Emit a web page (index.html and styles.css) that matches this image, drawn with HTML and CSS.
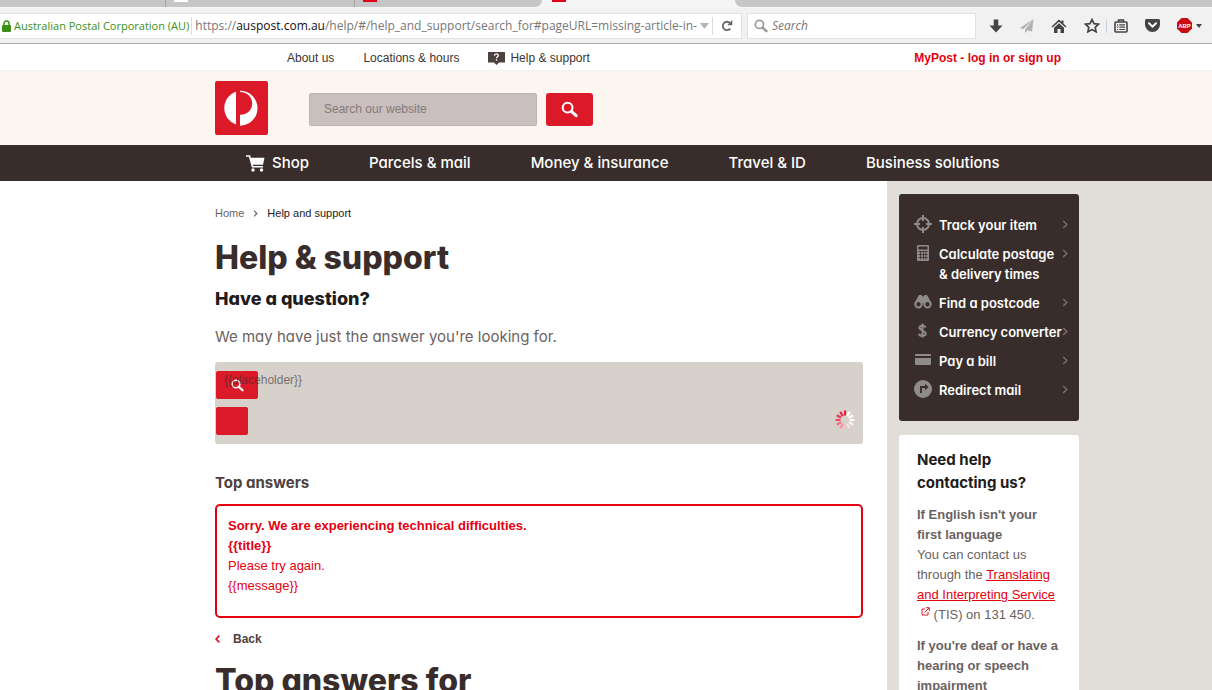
FILE: index.html
```html
<!DOCTYPE html>
<html lang="en">
<head>
    <meta charset="UTF-8">
    <meta name="viewport" content="width=device-width, initial-scale=1.0">
    <title>Help and support - Australia Post</title>
    <link rel="stylesheet" href="styles.css">
</head>
<body>
    <!-- Shared icons -->
    <svg class="icon-defs" aria-hidden="true">
        <symbol id="icon-search" viewBox="0 0 18 18">
            <circle cx="7" cy="7" r="5.2" fill="none" stroke="currentColor" stroke-width="2.2"/>
            <path d="M11 11l5 4.6" stroke="currentColor" stroke-width="3.2" stroke-linecap="round"/>
        </symbol>
        <symbol id="icon-chevron" viewBox="0 0 6 10">
            <path d="M1 1l4 4-4 4" fill="none" stroke="currentColor" stroke-width="1.6"/>
        </symbol>
    </svg>

    <div class="window">
        <!-- Browser chrome -->
        <div class="tab-strip">
            <div class="tab tab-first"></div>
            <div class="tab tab-second"><span class="favicon favicon-blank"></span></div>
            <div class="tab tab-third"><span class="favicon"></span></div>
            <div class="tab tab-active"><span class="favicon"></span></div>
            <div class="tab tab-rest"></div>
        </div>
        <div class="toolbar">
            <div class="address-bar">
                <svg class="lock" width="9" height="12" viewBox="0 0 9 12"><path d="M2 6V3.500a2.500 2.500 0 0 1 5 0V6" fill="none" stroke="#3b8f17" stroke-width="1.500"/><rect y="5" width="9" height="7" rx="1" fill="#3b8f17"/></svg>
                <span class="identity">Australian Postal Corporation (AU)</span>
                <span class="url">https://<b>auspost.com.au</b>/help/#/help_and_support/search_for#pageURL=missing-article-in-</span>
                <svg class="dropmarker" width="9" height="6" viewBox="0 0 9 6"><path d="M0 0h9L4.500 6z" fill="#b5b5b5"/></svg>
                <button class="reload" type="button" aria-label="Reload">
                    <svg width="12" height="12" viewBox="0 0 12 12"><path d="M9.300 8.600A4.200 4.200 0 1 1 9 3" fill="none" stroke="#666" stroke-width="1.800"/><path d="M11.300 0v5.200H6.200z" fill="#666"/></svg>
                </button>
            </div>
            <label class="browser-search">
                <svg width="14" height="14"><use href="#icon-search"/></svg>
                <input type="text" placeholder="Search" aria-label="Search the web">
            </label>
            <div class="toolbar-icons">
                <button type="button" aria-label="Downloads"><svg width="14" height="14" viewBox="0 0 14 14"><path d="M4.700 0.500h4.600v6H13.500L7 13.500.5 6.500h4.200z" fill="#444"/></svg></button>
                <button type="button" aria-label="Send"><svg width="14" height="14" viewBox="0 0 14 14"><path d="M13.500 0L0 9l3.500 1zM13.500 0L5 10.500V14l2.500-2.800 4.500 1.300z" fill="#b0b0b0"/></svg></button>
                <button type="button" aria-label="Home"><svg width="16" height="14" viewBox="0 0 16 14"><path d="M8 0.500l2.500 2.300V1.500h2v3.200L15.500 7.600l-1 1L8 2.800 1.500 8.600l-1-1z" fill="#444"/><path d="M8 4.300l5 4.500V14H9.500v-4h-3v4H3V8.800z" fill="#444"/></svg></button>
                <button type="button" aria-label="Bookmark"><svg width="16" height="15" viewBox="0 0 16 15"><path d="M8 1.500l2 4.100 4.600.6-3.400 3.100.9 4.500L8 11.600l-4.100 2.200.9-4.500L1.400 6.200 6 5.600z" fill="none" stroke="#444" stroke-width="1.700"/></svg></button>
                <button class="divided" type="button" aria-label="Bookmarks list"><svg width="14" height="14" viewBox="0 0 14 14"><path d="M4.500 3V1h5v2" fill="none" stroke="#444" stroke-width="1.500"/><rect x="1" y="3" width="12" height="10" rx="1" fill="none" stroke="#444" stroke-width="1.600"/><path d="M3 5.800h1.200M5.300 5.800H11M3 8.200h1.200M5.300 8.200H11M3 10.500h1.200M5.300 10.500H11" stroke="#444" stroke-width="1.200"/></svg></button>
                <button type="button" aria-label="Pocket"><svg width="15" height="13" viewBox="0 0 15 13"><path d="M1.500 0h12A1.500 1.500 0 0 1 15 1.500v4a7.500 7.500 0 0 1-15 0v-4A1.500 1.500 0 0 1 1.500 0z" fill="#444"/><path d="M4 4.200l3.500 3.400L11 4.200" fill="none" stroke="#fff" stroke-width="2" stroke-linecap="round"/></svg></button>
                <button class="adblock" type="button" aria-label="Adblock Plus"><svg width="15" height="15" viewBox="0 0 15 15"><path d="M4.500 0h6L15 4.500v6L10.500 15h-6L0 10.500v-6z" fill="#c70d10"/><text class="abp" x="7.500" y="10" text-anchor="middle">ABP</text></svg><svg width="6" height="4" viewBox="0 0 6 4"><path d="M0 0h6L3 4z" fill="#444"/></svg></button>
            </div>
        </div>

        <!-- Site header -->
        <nav class="utility-nav" aria-label="Utility">
            <a href="#">About us</a>
            <a href="#">Locations &amp; hours</a>
            <a class="utility-help" href="#"><svg width="17" height="13" viewBox="0 0 17 13"><path d="M0 0h17v10.500h-6L8.500 13 6 10.500H0z" fill="#4d423f"/><path d="M6.500 3.700C6.500 1.300 10.300 1.400 10.300 3.500c0 1.300-1.800 1.200-1.800 2.800M8.500 7.300v1.400" fill="none" stroke="#fff" stroke-width="1.300"/></svg>Help &amp; support</a>
            <a class="login" href="#">MyPost - log in or sign up</a>
        </nav>
        <header class="site-header">
            <a class="logo" href="#" aria-label="Australia Post">
                <svg width="53" height="54" viewBox="0 0 53 54"><rect width="53" height="54" rx="2" fill="#dc1928"/><path d="M21 10.800v32.600A17.200 17.200 0 0 1 21 10.800z" fill="#fff"/><path d="M25 9.700A17.500 17.500 0 1 1 25 44.700V33.800c16 0 16.500-22.300 0-22.800z" fill="#fff"/></svg>
            </a>
            <form class="site-search">
                <input type="text" placeholder="Search our website" aria-label="Search our website">
                <button type="button" aria-label="Search"><svg width="17" height="17"><use href="#icon-search"/></svg></button>
            </form>
        </header>
        <nav class="main-nav" aria-label="Main">
            <a href="#"><svg width="19" height="17" viewBox="0 0 19 17"><path d="M0 1h3.500l3 10.800H17" fill="none" stroke="#fff" stroke-width="1.600"/><path d="M4 2.800h14.500l-1.500 7H6z" fill="#fff"/><circle cx="7" cy="15" r="1.700" fill="#fff"/><circle cx="15.500" cy="15" r="1.700" fill="#fff"/></svg>Shop</a>
            <a href="#">Parcels &amp; mail</a>
            <a href="#">Money &amp; insurance</a>
            <a href="#">Travel &amp; ID</a>
            <a href="#">Business solutions</a>
        </nav>

        <div class="page">
            <main class="content">
                <div class="breadcrumb">
                    <a href="#">Home</a>
                    <svg width="5" height="7"><use href="#icon-chevron"/></svg>
                    <span>Help and support</span>
                </div>
                <h1>Help &amp; support</h1>
                <h2>Have a question?</h2>
                <p class="intro">We may have just the answer you're looking for.</p>

                <form class="question-form">
                    <input type="text" placeholder="{{placeholder}}" aria-label="Your question">
                    <button class="ask" type="button" aria-label="Search answers"><svg width="13" height="13"><use href="#icon-search"/></svg></button>
                    <button class="clear" type="button" aria-label="Clear"></button>
                    <svg class="spinner" width="20" height="20" viewBox="-10 -10 20 20" stroke-width="2.200">
                        <path d="M0-4.500V-9.500" stroke="#e01f35"/>
                        <path d="M0-4.500V-9.500" stroke="#fff" transform="rotate(30)"/>
                        <path d="M0-4.500V-9.500" stroke="#fff" transform="rotate(60)"/>
                        <path d="M0-4.500V-9.500" stroke="#fff" transform="rotate(90)"/>
                        <path d="M0-4.500V-9.500" stroke="#fdf0f3" transform="rotate(120)"/>
                        <path d="M0-4.500V-9.500" stroke="#fadbe2" transform="rotate(150)"/>
                        <path d="M0-4.500V-9.500" stroke="#f8bcc8" transform="rotate(180)"/>
                        <path d="M0-4.500V-9.500" stroke="#f593a3" transform="rotate(210)"/>
                        <path d="M0-4.500V-9.500" stroke="#f07084" transform="rotate(240)"/>
                        <path d="M0-4.500V-9.500" stroke="#eb5066" transform="rotate(270)"/>
                        <path d="M0-4.500V-9.500" stroke="#e83c53" transform="rotate(300)"/>
                        <path d="M0-4.500V-9.500" stroke="#e42b42" transform="rotate(330)"/>
                    </svg>
                </form>

                <h3>Top answers</h3>
                <div class="error-box">
                    <strong>Sorry. We are experiencing technical difficulties.</strong>
                    <strong>{{title}}</strong>
                    <p>Please try again.</p>
                    <p>{{message}}</p>
                </div>
                <a class="back" href="#"><svg width="5" height="8" viewBox="0 0 5 8"><path d="M4.300.7L1.200 4l3.100 3.300" fill="none" stroke="#dc1928" stroke-width="1.800"/></svg>Back</a>
                <h1>Top answers for</h1>
            </main>

            <aside class="sidebar">
                <ul class="quick-links">
                    <li><a href="#">
                        <svg class="tool" width="18" height="18" viewBox="0 0 18 18"><circle cx="9" cy="9" r="6" fill="none" stroke="currentColor" stroke-width="2"/><path d="M9 0v6M9 12v6M0 9h6M12 9h6" stroke="currentColor" stroke-width="2"/></svg>
                        <span>Track your item</span>
                        <svg class="arrow" width="6" height="9"><use href="#icon-chevron"/></svg>
                    </a></li>
                    <li><a href="#">
                        <svg class="tool" width="18" height="18" viewBox="0 0 18 18"><path fill-rule="evenodd" d="M4 1h10a1 1 0 0 1 1 1v14a1 1 0 0 1-1 1H4a1 1 0 0 1-1-1V2a1 1 0 0 1 1-1zm.5 1.500v3h9v-3z" fill="currentColor"/><path d="M4.500 7.500h9M4.500 10.500h9M4.500 13.500h9M6.500 7v8.500M9.500 7v8.500M12 7v8.500" stroke="#382d2b" stroke-width=".8"/></svg>
                        <span>Calculate postage &amp; delivery times</span>
                        <svg class="arrow" width="6" height="9"><use href="#icon-chevron"/></svg>
                    </a></li>
                    <li><a href="#">
                        <svg class="tool" width="18" height="18" viewBox="0 0 18 18"><path d="M4 3.500L5 2h2.500l1 1.500h1l1-1.500H13l1 1.500 3 6V12h-6l-1-2H8l-1 2H1V9.500z" fill="currentColor"/><circle cx="4.500" cy="11.200" r="3.200" fill="#382d2b" stroke="currentColor" stroke-width="2"/><circle cx="13.500" cy="11.200" r="3.200" fill="#382d2b" stroke="currentColor" stroke-width="2"/></svg>
                        <span>Find a postcode</span>
                        <svg class="arrow" width="6" height="9"><use href="#icon-chevron"/></svg>
                    </a></li>
                    <li><a href="#">
                        <svg class="tool" width="18" height="18" viewBox="0 0 18 18"><path d="M11.500 5.500C11 3 5.500 3 5.500 5.800S11.700 8.600 11.700 11.500 5.500 14.500 5 11.700M8.500 1.500v14" fill="none" stroke="currentColor" stroke-width="2"/></svg>
                        <span>Currency converter</span>
                        <svg class="arrow" width="6" height="9"><use href="#icon-chevron"/></svg>
                    </a></li>
                    <li><a href="#">
                        <svg class="tool" width="18" height="18" viewBox="0 0 18 18"><path d="M2 3h14a1 1 0 0 1 1 1v1H1V4a1 1 0 0 1 1-1zM1 7h16v6a1 1 0 0 1-1 1H2a1 1 0 0 1-1-1z" fill="currentColor"/></svg>
                        <span>Pay a bill</span>
                        <svg class="arrow" width="6" height="9"><use href="#icon-chevron"/></svg>
                    </a></li>
                    <li><a href="#">
                        <svg class="tool" width="18" height="18" viewBox="0 0 18 18"><circle cx="9" cy="9" r="9" fill="currentColor"/><path d="M7 13V7h5" fill="none" stroke="#382d2b" stroke-width="1.900"/><path d="M11 3.800L14.500 7 11 10.200z" fill="#382d2b"/></svg>
                        <span>Redirect mail</span>
                        <svg class="arrow" width="6" height="9"><use href="#icon-chevron"/></svg>
                    </a></li>
                </ul>

                <section class="contact-card">
                    <h2>Need help contacting us?</h2>
                    <p><strong>If English isn't your first language</strong><br>
                    You can contact us through the <a href="#">Translating and Interpreting Service</a> <svg class="external" width="9" height="9" viewBox="0 0 9 9"><path d="M4 2H1v6h6V5M3.500 5.500L8 1M5 .700h3.300V4" fill="none" stroke="#dc1928"/></svg> (TIS) on 131 450.</p>
                    <p><strong>If you're deaf or have a hearing or speech impairment</strong></p>
                </section>
            </aside>
        </div>
    </div>
</body>
</html>
```

FILE: styles.css
```css
* {
    box-sizing: border-box;
    margin: 0;
    padding: 0;
}

body {
    font-family: "Liberation Sans", Arial, sans-serif;
    font-size: 13px;
    line-height: 20px;
    color: #6b625f;
    background: #fff;
}

a {
    color: inherit;
    text-decoration: none;
}

button {
    border: none;
    background: none;
    cursor: pointer;
}

svg {
    flex: none;
}

.icon-defs {
    display: none;
}

.window {
    display: flex;
    flex-direction: column;
    height: 100vh;
    overflow: hidden;
}

/* Browser chrome */
.tab-strip {
    display: flex;
    flex: none;
    height: 8px;
    background: #f5f5f5;
}

.tab {
    height: 7px;
    background: #c6c6c6;
}

.tab-first {
    flex: 0 0 166px;
    border-right: 1px solid #a5a5a5;
}

.tab-second {
    flex: 0 0 189px;
    padding-left: 8px;
    border-right: 1px solid #a5a5a5;
}

.tab-third {
    flex: 0 0 187px;
    padding-left: 8px;
    border-bottom-right-radius: 7px;
}

.tab-active {
    flex: 0 0 193px;
    padding-left: 10px;
    background: #f5f5f5;
}

.tab-rest {
    flex: 1;
    border-bottom-left-radius: 7px;
}

.favicon {
    display: block;
    width: 14px;
    height: 2px;
    background: #e2001a;
}

.favicon-blank {
    background: #fff;
}

.toolbar {
    display: flex;
    flex: none;
    align-items: center;
    height: 36px;
    background: #f1f1f1;
    border-bottom: 1px solid #aaa;
    font-family: "Open Sans", "Noto Sans", sans-serif;
    font-size: 12px;
}

.address-bar {
    display: flex;
    flex: none;
    align-items: center;
    width: 742px;
    height: 26px;
    padding-left: 2px;
    background: #fff;
    border: 1px solid #e2e2e2;
    border-left: none;
}

.identity {
    margin: 0 3px;
    padding-right: 2px;
    border-right: 1px solid #ddd;
    font-size: 11px;
    line-height: 18px;
    color: #3b8f17;
    white-space: nowrap;
}

.url {
    flex: 1;
    color: #777;
    white-space: nowrap;
}

.url b {
    font-weight: 400;
    color: #111;
}

.reload {
    display: flex;
    margin-left: 3px;
    padding: 3px 8px;
    border-left: 1px solid #ddd;
}

.browser-search {
    display: flex;
    flex: 1;
    align-items: center;
    gap: 4px;
    height: 26px;
    margin-left: 5px;
    padding: 0 6px;
    background: #fff;
    border: 1px solid #e2e2e2;
    color: #999;
}

.browser-search input {
    width: 100%;
    border: none;
    outline: none;
    font: italic 12px "Open Sans", "Noto Sans", sans-serif;
}

.browser-search input::placeholder {
    color: #777;
}

.toolbar-icons {
    display: flex;
    align-items: center;
    gap: 17px;
    padding: 0 10px 0 13px;
}

.toolbar-icons button {
    display: flex;
    align-items: center;
}

.toolbar-icons .divided {
    margin-left: -11px;
    padding-left: 7px;
    border-left: 1px solid #c8d2dc;
}

.toolbar-icons .adblock {
    gap: 4px;
}

.abp {
    font: bold 6px "Liberation Sans", Arial, sans-serif;
    fill: #fff;
}

/* Site header */
.utility-nav {
    display: flex;
    flex: none;
    align-items: center;
    gap: 29px;
    height: 27px;
    padding: 2px 151px 0 287px;
    border-bottom: 1px solid #f4f1ee;
    font-size: 12px;
    color: #3d3331;
}

.utility-help {
    display: flex;
    align-items: center;
    gap: 5px;
}

.login {
    margin-left: auto;
    font-weight: 700;
    color: #e4000f;
}

.site-header {
    display: flex;
    flex: none;
    align-items: center;
    gap: 41px;
    height: 74px;
    padding-left: 215px;
    background: #fbf7f0;
}

.logo {
    display: flex;
}

.site-search {
    display: flex;
    gap: 9px;
    padding-top: 2px;
}

.site-search input {
    width: 228px;
    height: 33px;
    padding: 0 14px;
    border: 1px solid #bfb5b4;
    border-radius: 2px;
    background: #c8bfbe;
    font: 12px "Liberation Sans", Arial, sans-serif;
}

.site-search input::placeholder {
    color: #857a79;
}

.site-search button {
    display: flex;
    align-items: center;
    justify-content: center;
    width: 47px;
    height: 33px;
    border-radius: 3px;
    background: #dc1928;
    color: #fff;
}

.main-nav {
    display: flex;
    flex: none;
    align-items: center;
    gap: 60px;
    height: 36px;
    padding-left: 246px;
    background: #382d2b;
    color: #fff;
    font-family: Inter, sans-serif;
    font-feature-settings: "cv11";
    font-size: 15px;
    font-weight: 500;
}

.main-nav a {
    display: flex;
    align-items: center;
    gap: 7px;
}

/* Page columns */
.page {
    display: flex;
    flex: 1;
    min-height: 0;
    overflow: hidden;
}

.content {
    flex: 1;
    padding: 22px 24px 0 215px;
}

.breadcrumb {
    display: flex;
    align-items: center;
    gap: 9px;
    font-size: 11px;
    color: #6b625f;
}

.breadcrumb span {
    color: #211b1a;
}

h1,
h2,
h3,
.intro {
    font-family: Inter, sans-serif;
    font-feature-settings: "cv11";
}

h1 {
    margin-top: 15px;
    font-size: 32px;
    font-weight: 800;
    line-height: 40px;
    color: #382d2b;
}

h2 {
    margin-top: 9px;
    font-size: 18px;
    font-weight: 800;
    line-height: 24px;
    color: #211b1a;
}

.intro {
    margin-top: 14px;
    font-size: 15px;
    line-height: 24px;
}

.question-form {
    position: relative;
    display: flex;
    flex-direction: column;
    align-items: flex-start;
    gap: 8px;
    height: 82px;
    margin-top: 13px;
    padding: 9px 1px;
    border-radius: 3px;
    background: #d6d1ca;
}

/* The text box lies over the whole form */
.question-form input {
    position: absolute;
    z-index: 1;
    top: 0;
    left: 0;
    width: 100%;
    height: 36px;
    padding: 0 9px;
    border: none;
    background: none;
    font: 12px "Liberation Sans", Arial, sans-serif;
}

.question-form input::placeholder {
    color: #382d2b;
    opacity: 0.6;
}

.question-form button {
    display: flex;
    align-items: center;
    justify-content: center;
    height: 28px;
    border-radius: 2px;
    background: #dc1928;
    color: #fff;
}

.ask {
    width: 42px;
}

.clear {
    width: 32px;
}

.spinner {
    position: absolute;
    right: 8px;
    bottom: 14px;
}

h3 {
    margin-top: 29px;
    font-size: 15px;
    line-height: 20px;
    color: #4d423f;
}

.error-box {
    display: flex;
    flex-direction: column;
    height: 114px;
    margin-top: 11px;
    padding: 10px 11px;
    border: 2px solid #e4000f;
    border-radius: 5px;
    color: #e4000f;
}

.back {
    display: flex;
    align-items: center;
    gap: 13px;
    margin-top: 11px;
    font-size: 12px;
    font-weight: 700;
    color: #4d423f;
}

.back + h1 {
    margin-top: 12px;
}

.sidebar {
    flex: 0 0 325px;
    padding: 13px 133px 0 12px;
    background: #e1deda;
}

.quick-links {
    display: flex;
    flex-direction: column;
    gap: 9px;
    padding: 21px 11px 21px 15px;
    border-radius: 3px;
    background: #382d2b;
    color: #fff;
    font-family: Inter, sans-serif;
    font-feature-settings: "cv11";
    font-size: 13px;
    font-weight: 600;
    list-style: none;
}

.quick-links a {
    display: flex;
    align-items: flex-start;
}

.quick-links span {
    flex: 1;
    margin-left: 7px;
}

.tool {
    color: #8f8b8a;
}

.arrow {
    margin-top: 5px;
    color: #77706e;
}

.contact-card {
    margin-top: 14px;
    padding: 13px 14px 13px 18px;
    border-radius: 3px;
    background: #fff;
}

.contact-card h2 {
    margin: 0;
    font-size: 15px;
    font-weight: 700;
    line-height: 23px;
}

.contact-card p {
    margin-top: 11px;
}

.contact-card a {
    color: #e4000f;
    text-decoration: underline;
}

.external {
    margin-left: 4px;
    vertical-align: 3px;
}
```
